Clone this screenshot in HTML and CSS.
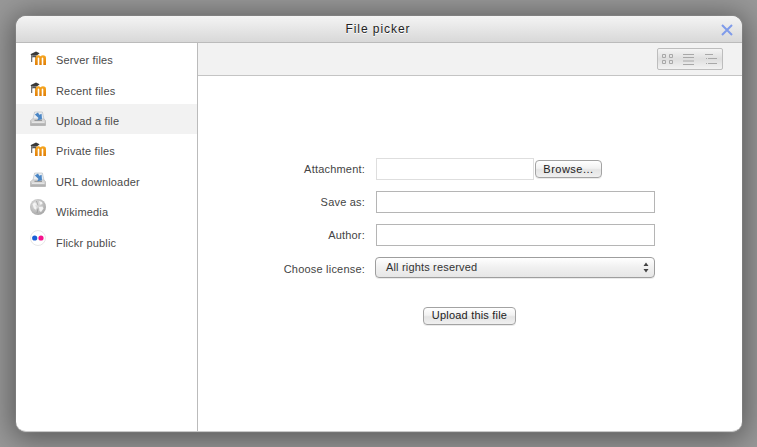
FILE: index.html
```html
<!DOCTYPE html>
<html lang="en">
<head>
<meta charset="utf-8">
<title>File picker</title>
<link rel="stylesheet" href="styles.css">
</head>
<body>
<svg class="defs" width="0" height="0" aria-hidden="true">
  <defs>
    <linearGradient id="mg" x1="0" y1="0" x2="0" y2="1"><stop offset="0" stop-color="#f7a823"/><stop offset="1" stop-color="#e07f08"/></linearGradient>
    <linearGradient id="tray" x1="0" y1="0" x2="0" y2="1"><stop offset="0" stop-color="#e4e4e4"/><stop offset="1" stop-color="#a9a9a9"/></linearGradient>
    <radialGradient id="globe" cx=".4" cy=".35" r=".7"><stop offset="0" stop-color="#e6e6e6"/><stop offset="1" stop-color="#a4a4a4"/></radialGradient>
    <symbol id="i-moodle" viewBox="0 0 16 16">
      <path d="M5 15V8c0-1.800 1-2.800 3-2.800 1.200 0 1.900.4 2.500 1.100.7-.7 1.500-1.100 2.500-1.100 2 0 3 1 3 2.800V15h-2.700V8.500c0-.6-.3-.9-.8-.9s-.8.3-.8.9V15H9.300V8.500c0-.6-.3-.9-.8-.9s-.8.3-.8.9V15z" fill="url(#mg)"/>
      <path d="M.4 4.300 6 1.400l3.600 1.900L6.800 5.600C5 5 3.400 5 2.200 5.600V12H1.300V5z" fill="#3a3a3a"/>
      <path d="M2.200 5.800C3.400 5.200 5 5.200 6 5.600V7.600C5 7 3.400 7 2.200 7.600z" fill="#555"/>
    </symbol>
    <symbol id="i-upload" viewBox="0 0 16 16">
      <path d="M2.800 9 4.600 1h7.800l1.800 8z" fill="#eaeef3" stroke="#b4b8be" stroke-width=".6"/>
      <path d="M.5 9.500 2.500 8h11l2 1.500v5H.5z" fill="url(#tray)" stroke="#a0a0a0" stroke-width=".5"/>
      <path d="M2 11.200h12.500" stroke="#f4f4f4" stroke-width="1"/>
      <path d="M4.500 9.300h7.500" stroke="#8a8a8a" stroke-width="1"/>
      <path d="M4.800 3.400 8 1.400l1.300 2.400 2.300-1 .4 5.400-4.800 1 1.300-2.300z" fill="#4a86c5"/>
    </symbol>
    <symbol id="i-wiki" viewBox="0 0 16 16">
      <circle cx="8" cy="8" r="8" fill="url(#globe)"/>
      <path d="M2.500 5 5 3.300l1.200 2-1 1.500 1.500 2-1 2-1.800-1.500zM9 2l3 1 .5 2L10 5.800zM9 8l3.500-.5 1 2L11 13l-1.500-1z" fill="#f4f4f4"/>
      <path d="M6.500 2 8 6.500M8 9.500 7 14" stroke="#8a8a8a" stroke-width=".6" fill="none"/>
    </symbol>
    <symbol id="i-flickr" viewBox="0 0 16 16">
      <circle cx="8" cy="8" r="7.500" fill="#fff" stroke="#dcdcdc" stroke-width=".7"/>
      <circle cx="4.700" cy="8" r="2.600" fill="#1a5fd6"/>
      <circle cx="11" cy="8" r="2.600" fill="#f5128c"/>
    </symbol>
  </defs>
</svg>
<main class="dialog">
  <header class="title-bar">
    <h1 class="title">File picker</h1>
    <svg class="close" viewBox="0 0 12 12" width="12" height="12" aria-label="Close"><path d="M1 1l10 10M11 1 1 11" stroke="#7f9bea" stroke-width="2" fill="none"/></svg>
  </header>
  <div class="body">
    <nav class="sidebar">
      <a class="repo"><svg class="repo-icon"><use href="#i-moodle"/></svg><span>Server files</span></a>
      <a class="repo"><svg class="repo-icon"><use href="#i-moodle"/></svg><span>Recent files</span></a>
      <a class="repo active"><svg class="repo-icon"><use href="#i-upload"/></svg><span>Upload a file</span></a>
      <a class="repo"><svg class="repo-icon"><use href="#i-moodle"/></svg><span>Private files</span></a>
      <a class="repo"><svg class="repo-icon"><use href="#i-upload"/></svg><span>URL downloader</span></a>
      <a class="repo"><svg class="repo-icon icon-wiki"><use href="#i-wiki"/></svg><span>Wikimedia</span></a>
      <a class="repo"><svg class="repo-icon icon-flickr"><use href="#i-flickr"/></svg><span>Flickr public</span></a>
    </nav>
    <section class="content">
      <div class="toolbar">
        <div class="view-switch">
          <svg class="view" viewBox="0 0 22 20" width="22" height="20"><path d="M4.500 5.500h3v3h-3zM11.500 5.500h3v3h-3zM4.500 11.500h3v3h-3zM11.500 11.500h3v3h-3z" fill="none" stroke="#a8a8a8"/></svg>
          <svg class="view" viewBox="0 0 22 20" width="22" height="20"><path d="M3 5.500h11M3 8.500h11M3 12h11M3 15.500h11" stroke="#a8a8a8" fill="none"/></svg>
          <svg class="view" viewBox="0 0 22 20" width="22" height="20"><path d="M3 5.500h8M4 9.500h1M6 9.500h9M4 14.500h1M6 14.500h9" stroke="#a8a8a8" fill="none"/></svg>
        </div>
      </div>
      <form class="upload-form">
        <div class="row row-file">
          <label class="label">Attachment:</label>
          <span class="file-box"></span>
          <button type="button" class="btn btn-browse">Browse...</button>
        </div>
        <div class="row">
          <label class="label">Save as:</label>
          <input class="field" type="text">
        </div>
        <div class="row">
          <label class="label">Author:</label>
          <input class="field" type="text">
        </div>
        <div class="row row-select">
          <label class="label">Choose license:</label>
          <div class="select"><span class="select-text">All rights reserved</span>
            <svg class="arrows" viewBox="0 0 6 11" width="6" height="11"><path d="M3 .5 5.500 4H.5zM3 10.500.5 7h5z" fill="#444"/></svg>
          </div>
        </div>
        <div class="submit"><button type="button" class="btn btn-upload">Upload this file</button></div>
      </form>
    </section>
  </div>
</main>
</body>
</html>
```

FILE: styles.css
```css
* { box-sizing: border-box; }
html, body { margin: 0; height: 100%; }
body {
  width: 757px;
  height: 447px;
  overflow: hidden;
  padding: 16px 15px 15px 16px;
  background: #989898;
  font-family: "Liberation Sans", Arial, sans-serif;
  font-size: 11px;
  color: #444;
}
.defs { position: absolute; }
.dialog {
  height: 416px;
  display: flex;
  flex-direction: column;
  background: #fff;
  border-radius: 10px;
  overflow: hidden;
  box-shadow: 0 3px 28px 4px rgba(0,0,0,.42), 0 0 0 1px rgba(255,255,255,.12);
  border-bottom: 1px solid #c9c9c9;
}
.title-bar {
  flex: none;
  height: 27px;
  display: flex;
  align-items: center;
  justify-content: center;
  background: linear-gradient(#f4f4f4, #d8d8d8);
  border-bottom: 1px solid #bbb;
  position: relative;
}
.title {
  margin: 0;
  padding-right: 2px;
  font-size: 12px;
  font-weight: normal;
  letter-spacing: .95px;
  color: #222;
  text-shadow: 0 1px 0 #fff;
}
.close { position: absolute; right: 9px; top: 8px; }
.body { flex: 1; display: flex; min-height: 0; }
.sidebar {
  flex: none;
  width: 182px;
  border-right: 1px solid #bbb;
}
.repo {
  height: 30.4px;
  padding-left: 14px;
  display: flex;
  align-items: center;
  color: #4a4a4a;
  letter-spacing: .16px;
}
.repo span { margin-left: 10px; padding-top: 4px; }
.repo-icon { width: 16px; height: 16px; flex: none; }
.icon-wiki { margin-top: -6px; }
.icon-flickr { margin-top: -5px; }
.active { background: #f2f2f2; }
.content { flex: 1; display: flex; flex-direction: column; }
.toolbar {
  flex: none;
  height: 33px;
  background: #f2f2f2;
  border-bottom: 1px solid #c4c4c4;
  display: flex;
  justify-content: flex-end;
  align-items: flex-start;
  padding: 5px 19px 0 0;
}
.view-switch {
  width: 66px;
  height: 22px;
  display: flex;
  border: 1px solid #bdbdbd;
  border-radius: 2px;
  background: linear-gradient(#f4f4f4, #dedede 50%, #f2f2f2);
}
.view { flex: none; }
.upload-form { flex: 1; padding: 82px 0 0; }
.row {
  height: 22px;
  margin-bottom: 11px;
  display: flex;
  align-items: center;
  color: #444;
}
.label {
  width: 167px;
  text-align: right;
  margin-right: 11px;
  padding-bottom: 1px;
  letter-spacing: .2px;
}
.file-box {
  width: 158px;
  height: 22px;
  border: 1px solid #dedede;
  background: #fff;
}
.field {
  width: 279px;
  height: 22px;
  margin: 0;
  padding: 0 4px;
  border: 1px solid #b5b5b5;
  border-radius: 0;
  background: #fff;
  outline: none;
}
.btn {
  height: 18px;
  margin: 0;
  font: 11px "Liberation Sans", Arial, sans-serif;
  color: #222;
  border: 1px solid #a3a3a3;
  border-radius: 4px;
  background: linear-gradient(#fff, #f2f2f2 45%, #e4e4e4 55%, #f0f0f0);
  box-shadow: 0 1px 0 rgba(0,0,0,.08);
}
.btn-browse { width: 67px; margin-left: 1px; padding: 0; letter-spacing: .5px; }
.row-select .label { margin-right: 10px; padding: 1px 0 0; }
.select {
  width: 280px;
  height: 21px;
  align-self: flex-start;
  padding: 0 5px 0 10px;
  display: flex;
  align-items: center;
  justify-content: space-between;
  color: #333;
  border: 1px solid #9e9e9e;
  border-radius: 4px;
  background: linear-gradient(#fff, #f0f0f0 50%, #e6e6e6);
  box-shadow: 0 1px 0 rgba(0,0,0,.08);
}
.select-text { padding-bottom: 1px; letter-spacing: .17px; }
.submit { padding: 17px 0 0 225px; }
.btn-upload { width: 93px; padding: 0 0 2px; letter-spacing: .2px; }
```
